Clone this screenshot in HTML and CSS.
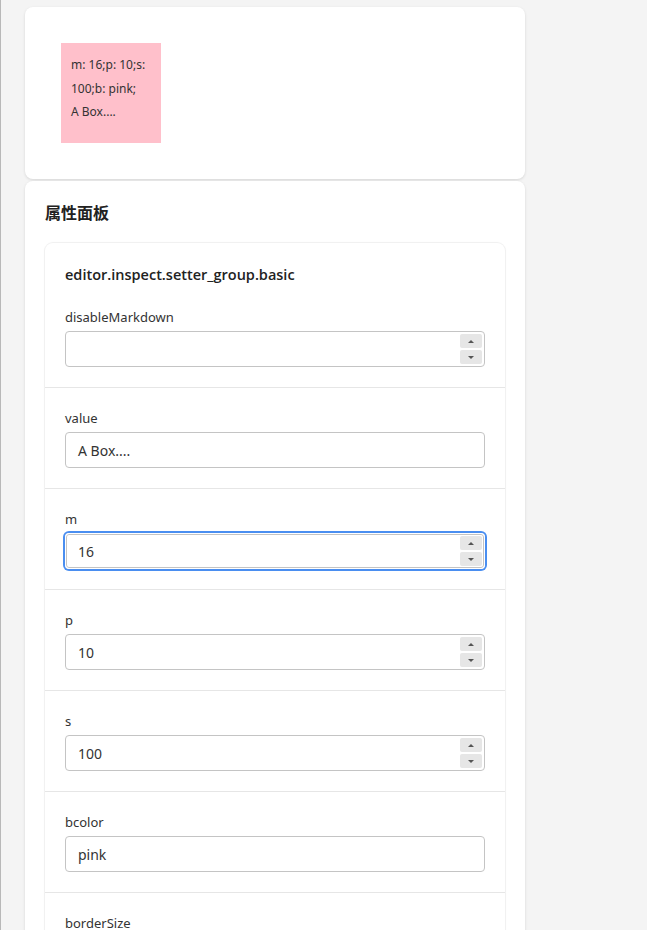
FILE: index.html
```html
<!DOCTYPE html>
<html lang="zh">
<head>
<meta charset="utf-8">
<title>属性面板</title>
<link rel="stylesheet" href="styles.css">
</head>
<body>
<div class="page">
  <section class="card preview">
    <div class="box"><span class="line">m: 16;p: 10;s: 100;b: pink;</span><span class="line">A Box....</span></div>
  </section>
  <section class="card panel">
    <h2 class="panel-title">属性面板</h2>
    <div class="group">
      <h3 class="group-title">editor.inspect.setter_group.basic</h3>
      <div class="field">
        <label class="label">disableMarkdown</label>
        <div class="input num"><span class="val"></span><span class="spin"><span class="btn up"></span><span class="btn down"></span></span></div>
      </div>
      <div class="field">
        <label class="label">value</label>
        <div class="input"><span class="val">A Box....</span></div>
      </div>
      <div class="field">
        <label class="label">m</label>
        <div class="input num focus"><span class="val">16</span><span class="spin"><span class="btn up"></span><span class="btn down"></span></span></div>
      </div>
      <div class="field">
        <label class="label">p</label>
        <div class="input num"><span class="val">10</span><span class="spin"><span class="btn up"></span><span class="btn down"></span></span></div>
      </div>
      <div class="field">
        <label class="label">s</label>
        <div class="input num"><span class="val">100</span><span class="spin"><span class="btn up"></span><span class="btn down"></span></span></div>
      </div>
      <div class="field">
        <label class="label">bcolor</label>
        <div class="input"><span class="val">pink</span></div>
      </div>
      <div class="field">
        <label class="label">borderSize</label>
        <div class="input num"><span class="val">1</span><span class="spin"><span class="btn up"></span><span class="btn down"></span></span></div>
      </div>
    </div>
  </section>
</div>
</body>
</html>
```
FILE: styles.css
```css
html, body {
  margin: 0;
  padding: 0;
}
body {
  background: #f4f4f4;
  font-family: "Noto Sans", "Open Sans", "Noto Sans CJK SC", sans-serif;
  color: #333;
  border-left: 1px solid #b8b8b8;
  min-height: 930px;
  box-sizing: border-box;
  overflow: hidden;
}
.page {
  width: 500px;
  margin-left: 24px;
  padding-top: 7px;
  display: flex;
  flex-direction: column;
  gap: 2px;
}
.card {
  background: #fff;
  border-radius: 8px;
  box-shadow: 0 1px 3px rgba(0,0,0,0.12);
  padding: 20px;
}
.box {
  width: 100px;
  height: 100px;
  box-sizing: border-box;
  margin: 16px;
  padding: 10px;
  background: pink;
  font-size: 12px;
  line-height: 23.5px;
  color: #333;
}
.box .line {
  display: block;
}
.panel-title {
  margin: 0 0 20px;
  font-family: "Noto Sans CJK SC", sans-serif;
  font-size: 16px;
  font-weight: 700;
  line-height: 22px;
  color: #222;
}
.group {
  background: #fff;
  border-radius: 8px;
  box-shadow: 0 0 0 1px #f1f1f1, 0 0 3px rgba(0,0,0,0.04);
}
.group-title {
  margin: 0;
  padding: 20px 20px 0;
  font-family: "Open Sans", "Noto Sans", sans-serif;
  font-size: 14.5px;
  font-weight: 600;
  line-height: 24px;
  color: #222;
}
.field {
  padding: 20px;
  border-bottom: 1px solid #e6e6e6;
  display: flex;
  flex-direction: column;
  gap: 4px;
}
.label {
  font-size: 13px;
  line-height: 20px;
  color: #333;
}
.input {
  height: 36px;
  box-sizing: border-box;
  border: 1px solid #c4c4c4;
  border-radius: 4px;
  display: flex;
  align-items: center;
  padding: 0 2px 0 12px;
  font-size: 14px;
  color: #333;
}
.input .val {
  flex: 1;
}
.input.focus {
  border-color: #fff;
  box-shadow: 0 0 0 2px #4a8ef0, inset 0 0 0 1px #c4c4c4;
}
.spin {
  display: flex;
  flex-direction: column;
  gap: 2px;
  width: 22px;
}
.btn {
  height: 14px;
  background: #e6e6e6;
  border-radius: 2px;
  display: flex;
  align-items: center;
  justify-content: center;
}
.btn::after {
  content: "";
  width: 0;
  height: 0;
  border-left: 3px solid transparent;
  border-right: 3px solid transparent;
}
.btn.up::after {
  border-bottom: 3px solid #555;
}
.btn.down::after {
  border-top: 3px solid #555;
}
```
